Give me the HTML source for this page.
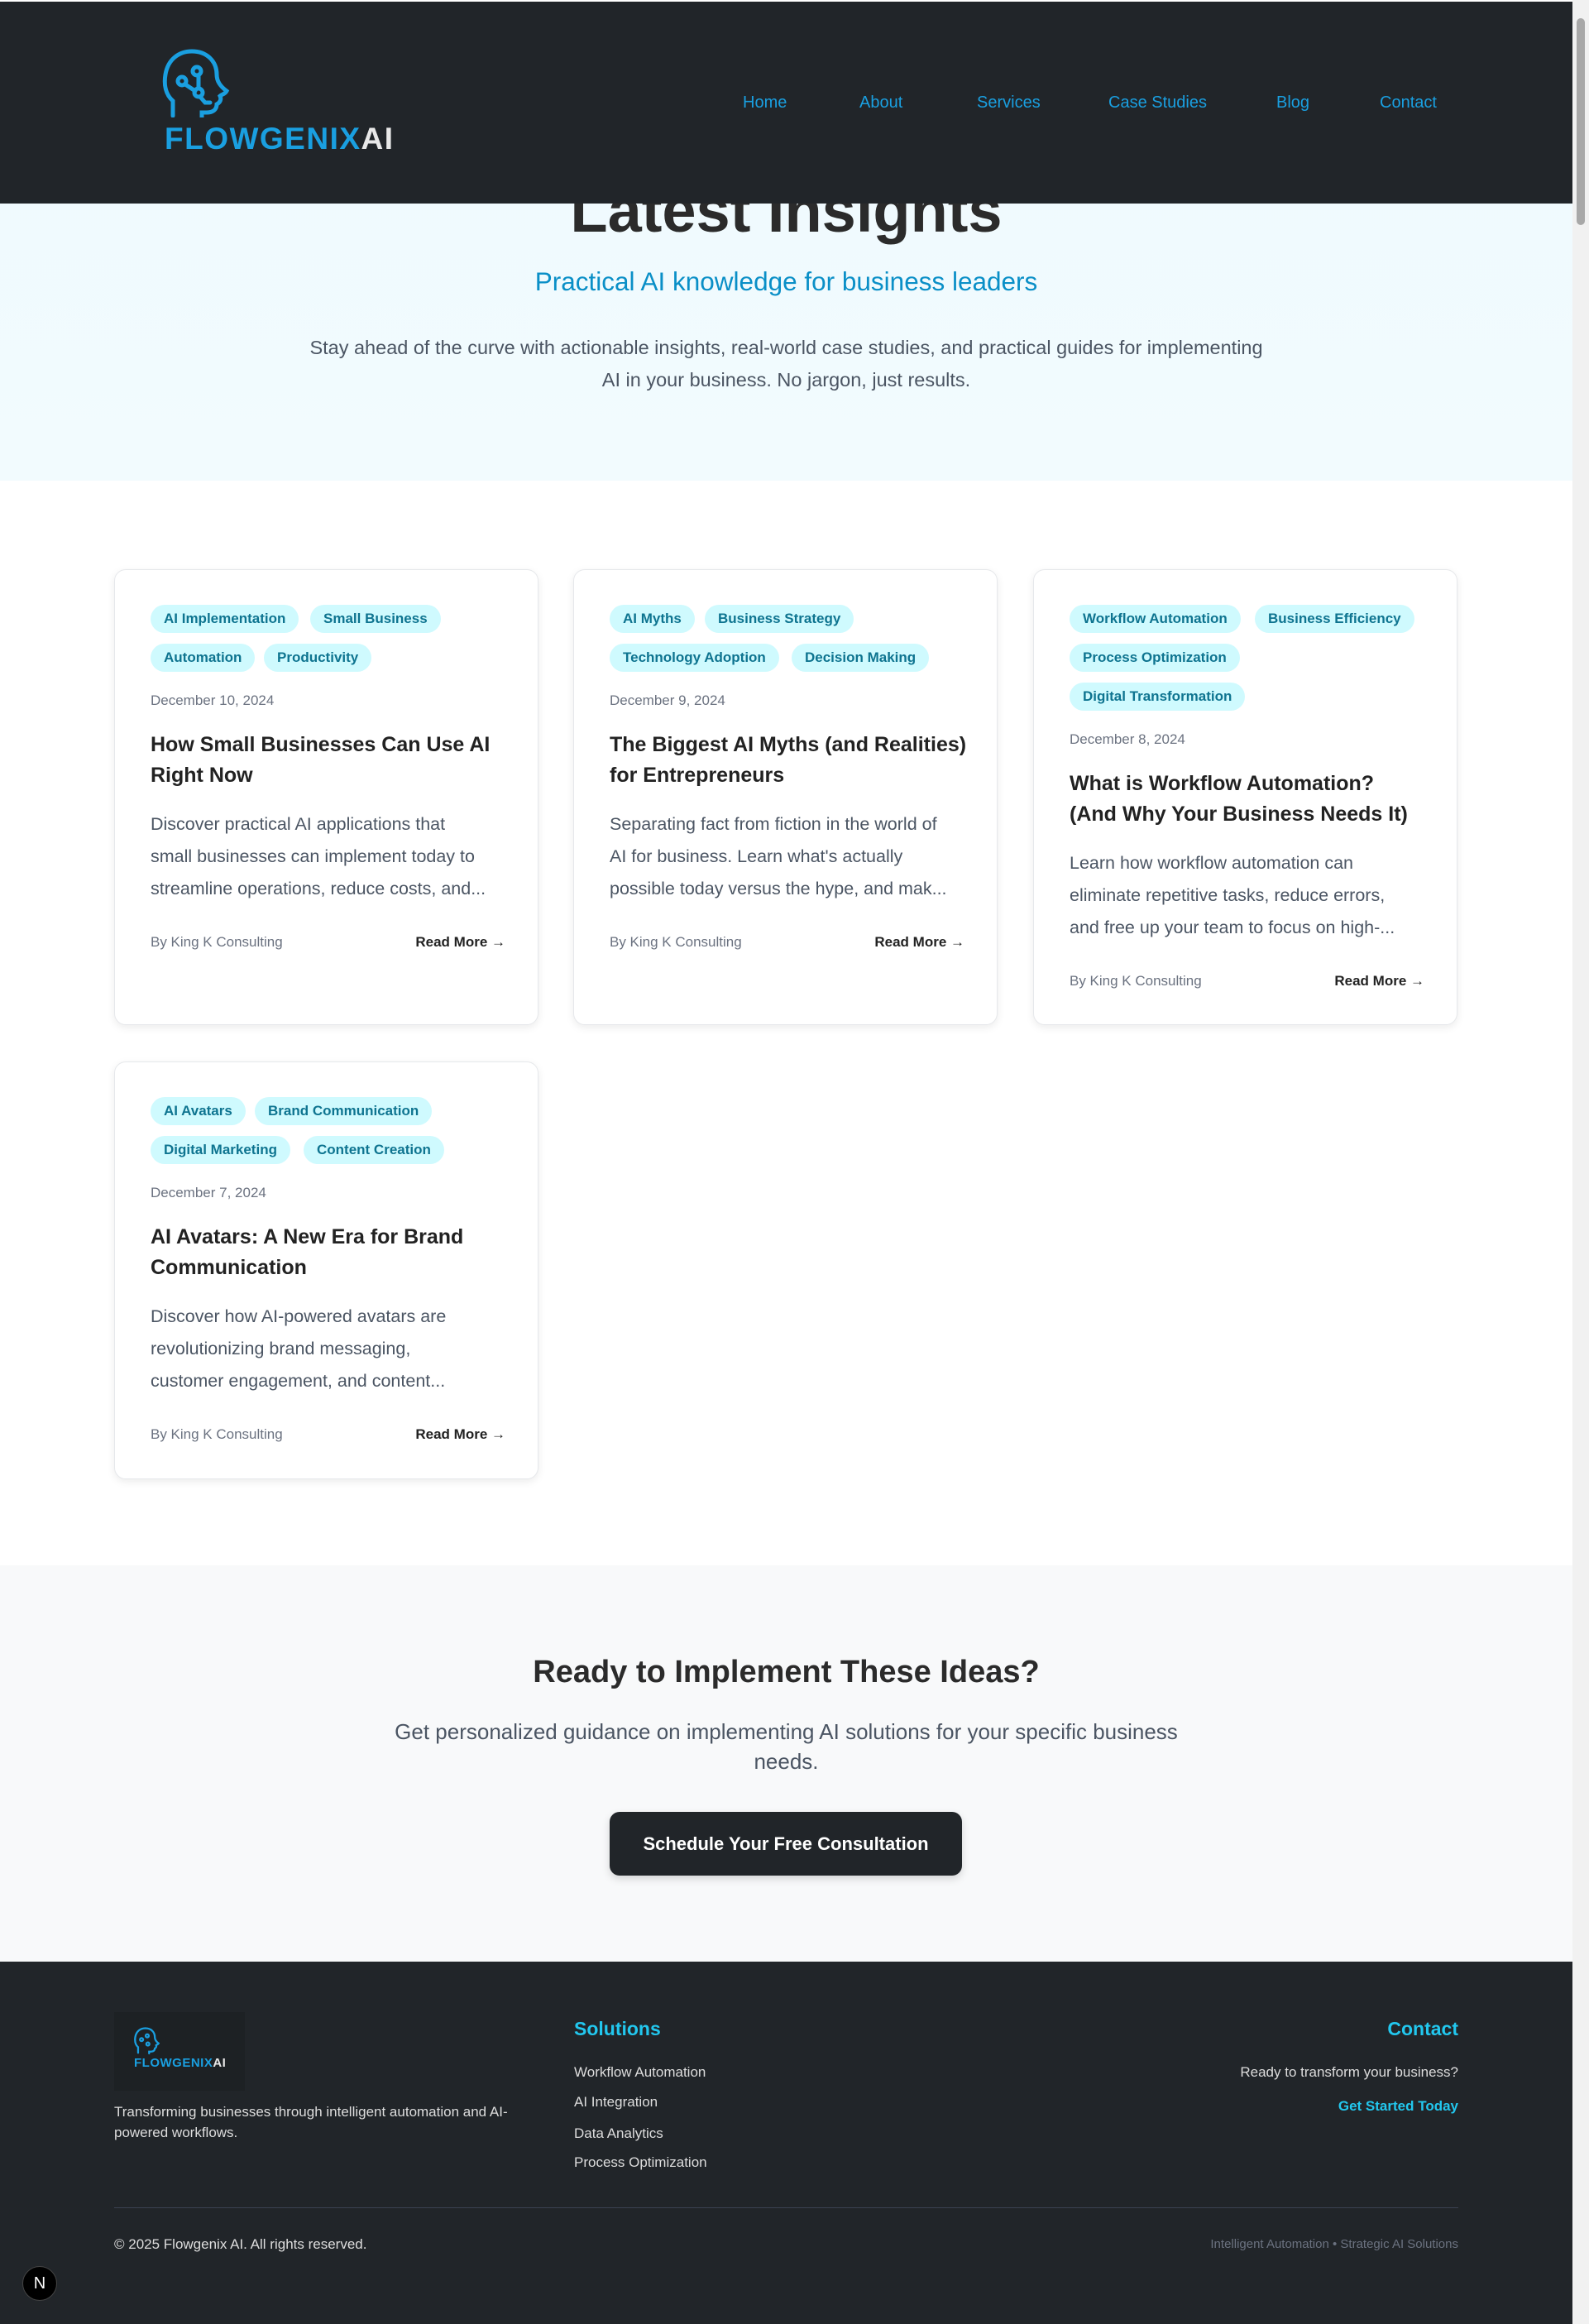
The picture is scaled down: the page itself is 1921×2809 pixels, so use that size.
<!DOCTYPE html>
<html><head><meta charset="utf-8"><style>
*{margin:0;padding:0;box-sizing:border-box}
body{width:1921px;height:2809px;position:relative;background:#fff;font-family:"Liberation Sans",sans-serif;overflow:hidden}
.a{position:absolute}
.hero{left:0;top:0;width:1901px;height:581px;background:linear-gradient(180deg,#eefafd,#f2fbfe)}
.hdr{left:0;top:0;width:1901px;height:246px;background:#212529;border-top:2px solid #fff}
.nav{top:110px;font-size:20px;color:#1a9fe0;line-height:28px}
.card{background:#fff;border:1px solid #e6e8eb;border-radius:14px;box-shadow:0 3px 10px rgba(0,0,0,.08)}
.tag{position:absolute;height:34px;line-height:34px;border-radius:17px;background:#cffafe;color:#0e7490;font-size:17px;padding:0 16px;white-space:nowrap;font-weight:600}
.date{position:absolute;font-size:17px;color:#6b7280;line-height:24px}
.ttl{position:absolute;font-size:25px;color:#222;font-weight:600;line-height:37px;width:412px}
.ex{position:absolute;font-size:21.5px;color:#4b5563;line-height:39px;width:418px}
.by{position:absolute;font-size:17px;color:#6b7280;line-height:24px}
.rm{position:absolute;font-size:17px;color:#222;line-height:24px;font-weight:600;text-align:right}
.ft{font-size:17px;color:#ddd;line-height:24px}
</style></head><body>
<div class="a hero"></div>
<div class="a" style="left:0;top:210px;width:1901px;text-align:center;font-size:74px;font-weight:700;color:#2b2b2b;line-height:90px">Latest Insights</div>
<div class="a hdr"></div>
<svg class="a" style="left:196px;top:58px" width="84" height="84" viewBox="0 0 84 84" fill="none" stroke="#1a9fe0" stroke-width="5" stroke-linecap="round">
<path d="M13 82 V64 C4 56 2 44 4 32 C7 14 20 4 36 4 C54 4 66 16 66 32 C66 40 70 46 78 52 C76 56 72 56 70 58 C72 62 70 66 66 68 C66 74 62 78 54 78 H48 V84"/>
<circle cx="24" cy="40" r="5"/><circle cx="42" cy="28" r="5"/><circle cx="44" cy="54" r="5"/>
<path d="M28 44 L40 52 M44 33 V49 M46 59 L52 66 H58"/>
</svg>
<div class="a" style="left:199px;top:146px;font-size:37px;line-height:44px;letter-spacing:1.5px;font-weight:600;color:#1a9fe0">FLOWGENIX<span style="color:#e8e8e8">AI</span></div>
<div class="a nav" style="left:898px">Home</div>
<div class="a nav" style="left:1039px">About</div>
<div class="a nav" style="left:1181px">Services</div>
<div class="a nav" style="left:1340px">Case Studies</div>
<div class="a nav" style="left:1543px">Blog</div>
<div class="a nav" style="left:1668px">Contact</div>

<div class="a" style="left:0;top:320px;width:1901px;text-align:center;font-size:31.5px;color:#0a8fc7;line-height:40px">Practical AI knowledge for business leaders</div>
<div class="a" style="left:330px;top:401px;width:1241px;text-align:center;font-size:23.5px;color:#4b5563;line-height:39px">Stay ahead of the curve with actionable insights, real-world case studies, and practical guides for implementing<br>AI in your business. No jargon, just results.</div>

<div class="a card" style="left:138px;top:688px;width:513px;height:551px">
<span class="tag" style="left:43px;top:42px">AI Implementation</span>
<span class="tag" style="left:236px;top:42px">Small Business</span>
<span class="tag" style="left:43px;top:89px">Automation</span>
<span class="tag" style="left:180px;top:89px">Productivity</span>
<div class="date" style="left:43px;top:146px">December 10, 2024</div>
<div class="ttl" style="left:43px;top:193px">How Small Businesses Can Use AI Right Now</div>
<div class="ex" style="left:43px;top:288px;white-space:nowrap">Discover practical AI applications that<br>small businesses can implement today to<br>streamline operations, reduce costs, and...</div>
<div class="by" style="left:43px;top:438px">By King K Consulting</div>
<div class="rm" style="right:39px;top:438px">Read More →</div>
</div>
<div class="a card" style="left:693px;top:688px;width:513px;height:551px">
<span class="tag" style="left:43px;top:42px">AI Myths</span>
<span class="tag" style="left:158px;top:42px">Business Strategy</span>
<span class="tag" style="left:43px;top:89px">Technology Adoption</span>
<span class="tag" style="left:263px;top:89px">Decision Making</span>
<div class="date" style="left:43px;top:146px">December 9, 2024</div>
<div class="ttl" style="left:43px;top:193px;width:440px">The Biggest AI Myths (and Realities) for Entrepreneurs</div>
<div class="ex" style="left:43px;top:288px">Separating fact from fiction in the world of AI for business. Learn what's actually possible today versus the hype, and mak...</div>
<div class="by" style="left:43px;top:438px">By King K Consulting</div>
<div class="rm" style="right:39px;top:438px">Read More →</div>
</div>
<div class="a card" style="left:1249px;top:688px;width:513px;height:551px">
<span class="tag" style="left:43px;top:42px">Workflow Automation</span>
<span class="tag" style="left:267px;top:42px">Business Efficiency</span>
<span class="tag" style="left:43px;top:89px">Process Optimization</span>
<span class="tag" style="left:43px;top:136px">Digital Transformation</span>
<div class="date" style="left:43px;top:193px">December 8, 2024</div>
<div class="ttl" style="left:43px;top:240px;width:430px">What is Workflow Automation?<br>(And Why Your Business Needs It)</div>
<div class="ex" style="left:43px;top:335px">Learn how workflow automation can eliminate repetitive tasks, reduce errors, and free up your team to focus on high-...</div>
<div class="by" style="left:43px;top:485px">By King K Consulting</div>
<div class="rm" style="right:39px;top:485px">Read More →</div>
</div>
<div class="a card" style="left:138px;top:1283px;width:513px;height:505px">
<span class="tag" style="left:43px;top:42px">AI Avatars</span>
<span class="tag" style="left:169px;top:42px">Brand Communication</span>
<span class="tag" style="left:43px;top:89px">Digital Marketing</span>
<span class="tag" style="left:228px;top:89px">Content Creation</span>
<div class="date" style="left:43px;top:146px">December 7, 2024</div>
<div class="ttl" style="left:43px;top:193px">AI Avatars: A New Era for Brand Communication</div>
<div class="ex" style="left:43px;top:288px;width:400px">Discover how AI-powered avatars are revolutionizing brand messaging, customer engagement, and content...</div>
<div class="by" style="left:43px;top:438px">By King K Consulting</div>
<div class="rm" style="right:39px;top:438px">Read More →</div>
</div>

<div class="a" style="left:0;top:1892px;width:1901px;height:479px;background:#f8f9fa"></div>
<div class="a" style="left:0;top:1997px;width:1901px;text-align:center;font-size:38px;font-weight:700;color:#2b2b2b;line-height:48px">Ready to Implement These Ideas?</div>
<div class="a" style="left:460px;top:2075px;width:981px;text-align:center;font-size:26px;color:#4b5563;line-height:36px">Get personalized guidance on implementing AI solutions for your specific business needs.</div>
<div class="a" style="left:737px;top:2190px;width:426px;height:77px;background:#212529;border-radius:12px;color:#fff;font-size:22px;font-weight:600;text-align:center;line-height:77px;box-shadow:0 4px 10px rgba(0,0,0,.15)">Schedule Your Free Consultation</div>

<div class="a" style="left:0;top:2371px;width:1901px;height:438px;background:#212529"></div>
<div class="a" style="left:138px;top:2432px;width:158px;height:95px;background:#1d2124"></div>
<svg class="a" style="left:162px;top:2448px" width="32" height="36" viewBox="0 0 84 84" fill="none" stroke="#1a9fe0" stroke-width="6" stroke-linecap="round">
<path d="M13 82 V64 C4 56 2 44 4 32 C7 14 20 4 36 4 C54 4 66 16 66 32 C66 40 70 46 78 52 C76 56 72 56 70 58 C72 62 70 66 66 68 C66 74 62 78 54 78 H48 V84"/>
<circle cx="24" cy="40" r="5"/><circle cx="42" cy="28" r="5"/><circle cx="44" cy="54" r="5"/>
</svg>
<div class="a" style="left:162px;top:2484px;font-size:15px;font-weight:600;letter-spacing:.5px;color:#1a9fe0;line-height:20px">FLOWGENIX<span style="color:#e8e8e8">AI</span></div>
<div class="a ft" style="left:138px;top:2540px;width:520px;line-height:25px">Transforming businesses through intelligent automation and AI-powered workflows.</div>
<div class="a" style="left:694px;top:2437px;font-size:23px;font-weight:600;color:#22c7ee;line-height:30px">Solutions</div>
<div class="a ft" style="left:694px;top:2493px">Workflow Automation</div>
<div class="a ft" style="left:694px;top:2529px">AI Integration</div>
<div class="a ft" style="left:694px;top:2567px">Data Analytics</div>
<div class="a ft" style="left:694px;top:2602px">Process Optimization</div>
<div class="a" style="right:158px;top:2437px;font-size:23px;font-weight:600;color:#22c7ee;line-height:30px">Contact</div>
<div class="a ft" style="right:158px;top:2493px">Ready to transform your business?</div>
<div class="a ft" style="right:158px;top:2534px;color:#22c7ee;font-weight:700">Get Started Today</div>
<div class="a" style="left:138px;top:2668px;width:1625px;height:1px;background:#3b4252"></div>
<div class="a ft" style="left:138px;top:2701px">© 2025 Flowgenix AI. All rights reserved.</div>
<div class="a" style="right:158px;top:2703px;font-size:15px;color:#6b7280;line-height:20px">Intelligent Automation • Strategic AI Solutions</div>
<div class="a" style="left:27px;top:2739px;width:42px;height:42px;border-radius:50%;background:#000;border:1px solid #444;color:#fff;font-size:20px;text-align:center;line-height:40px">N</div>
<div class="a" style="left:1901px;top:0;width:20px;height:2809px;background:#f1f1f1"></div>
<div class="a" style="left:1906px;top:22px;width:10px;height:250px;border-radius:5px;background:#a8a8a8"></div>
</body></html>
